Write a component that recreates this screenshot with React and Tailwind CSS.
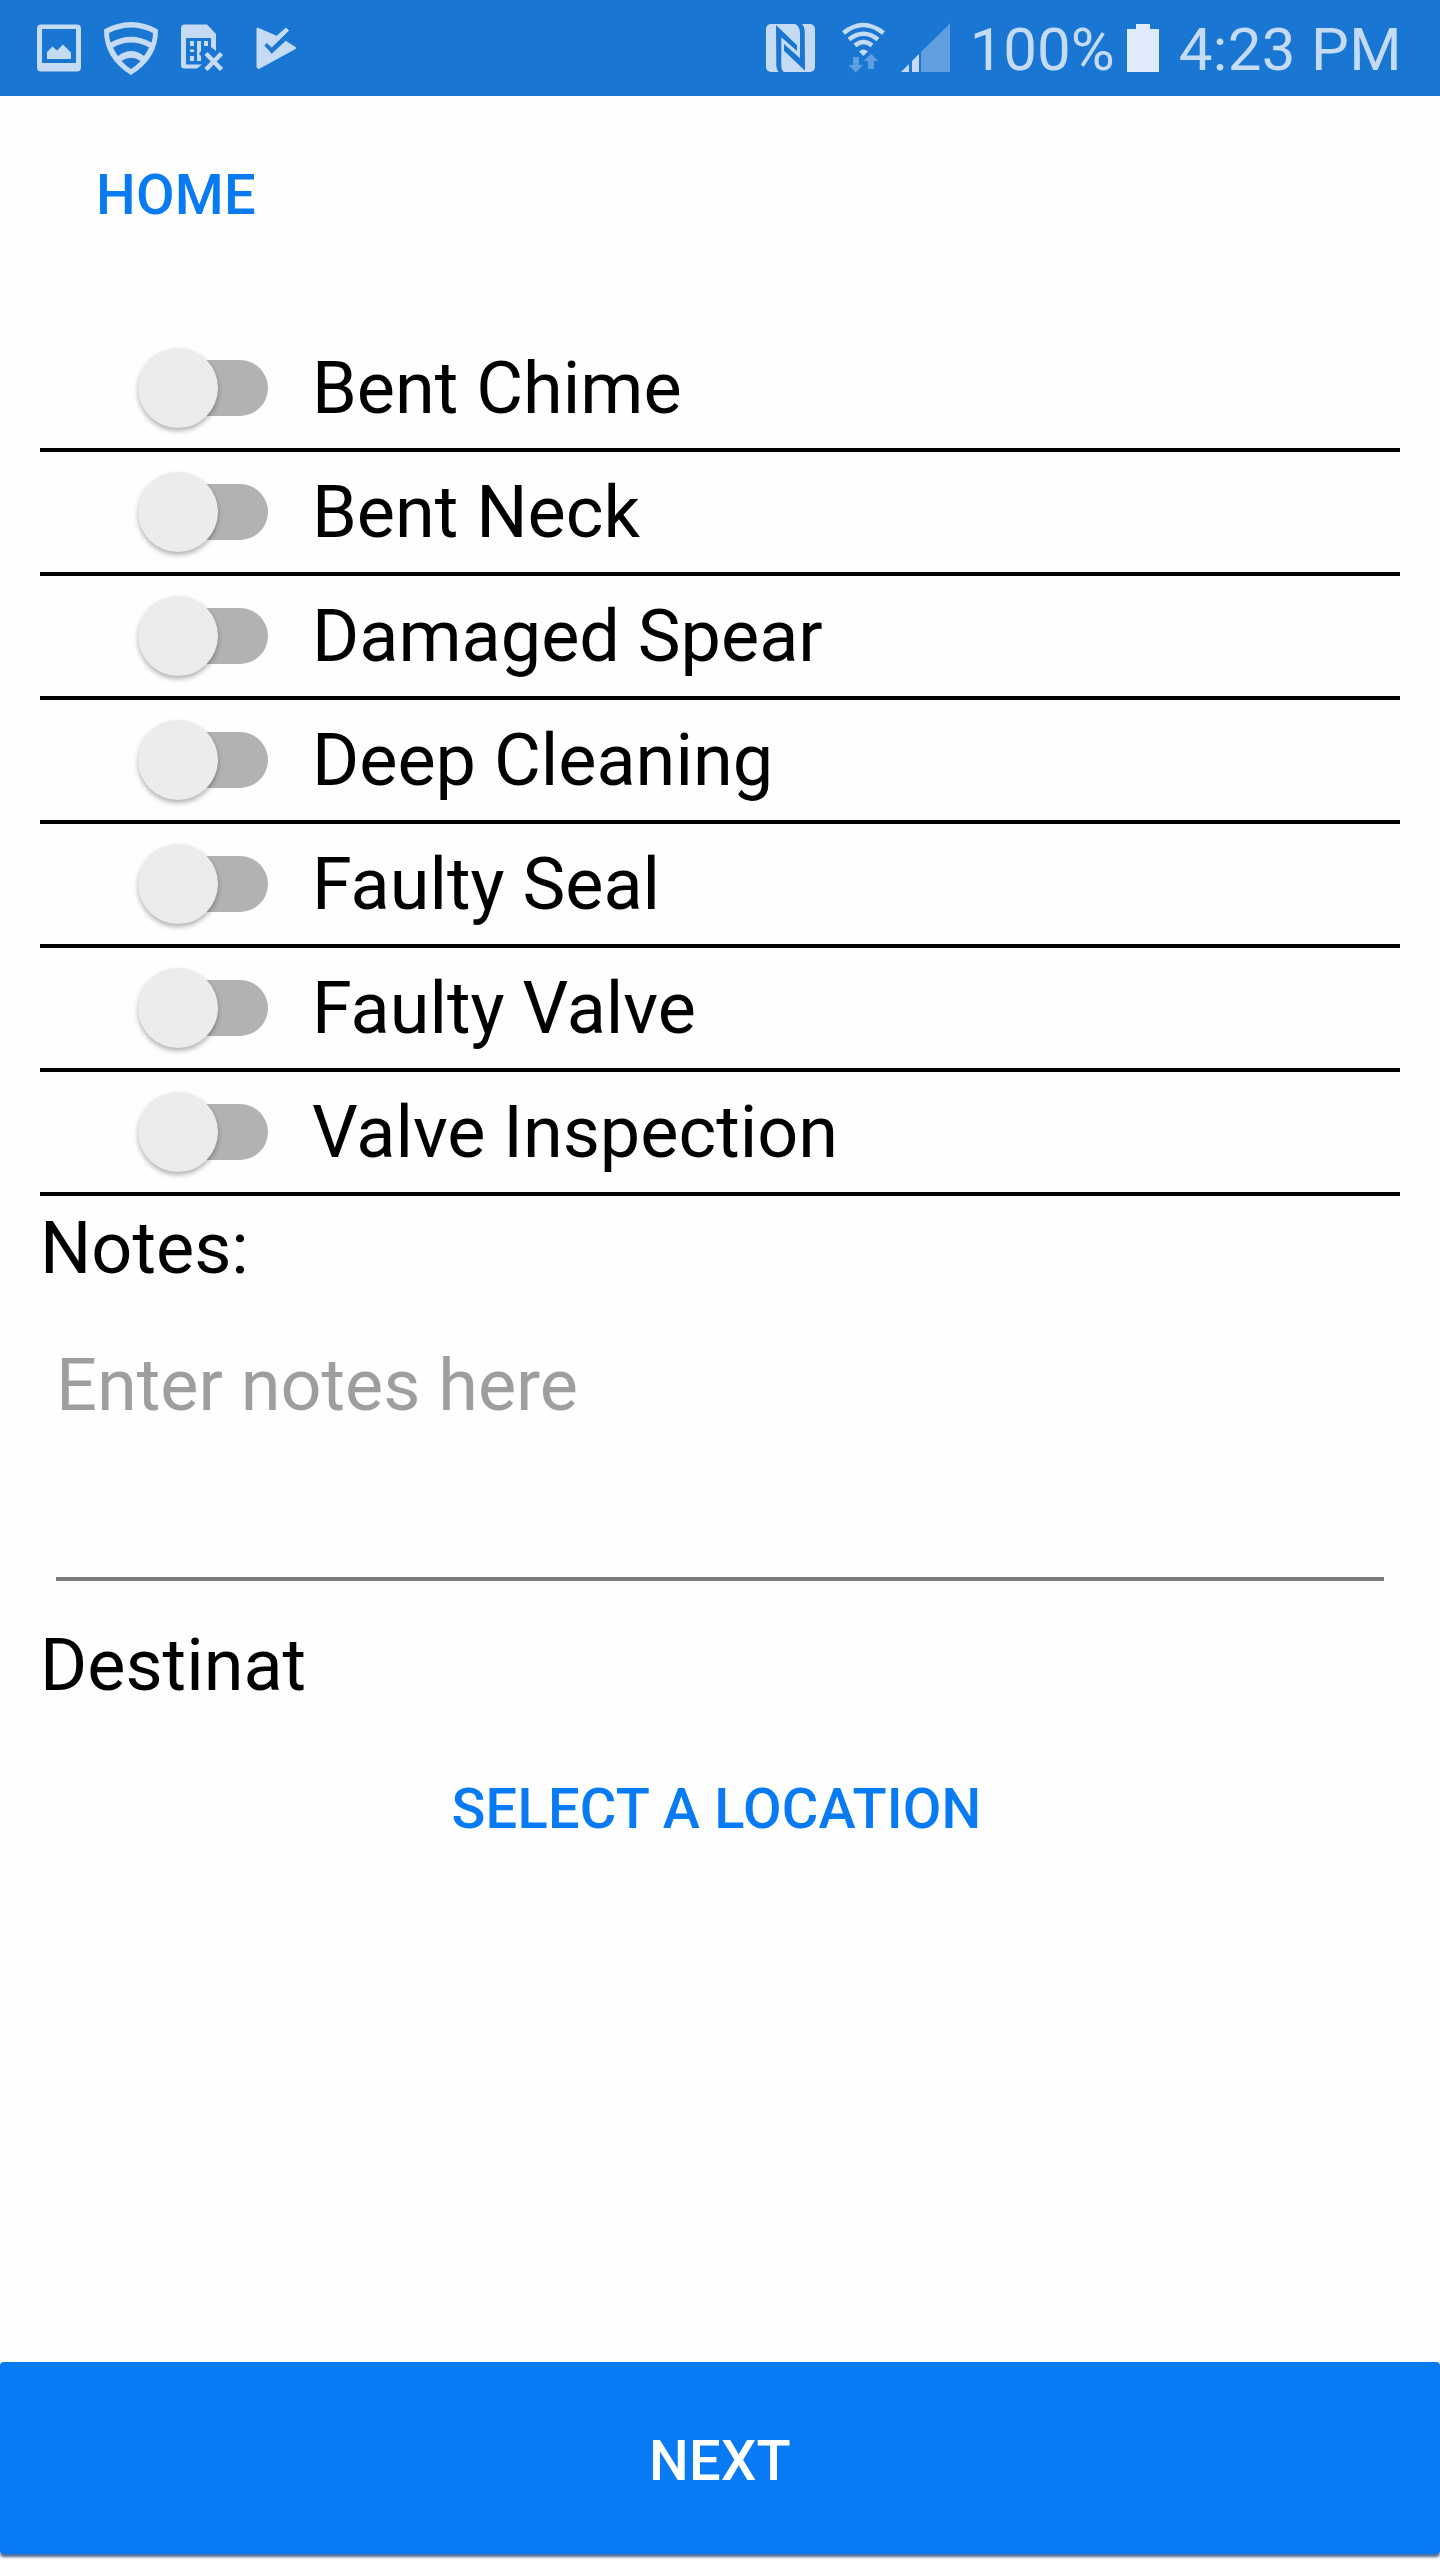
const defects = [
  "Bent Chime",
  "Bent Neck",
  "Damaged Spear",
  "Deep Cleaning",
  "Faulty Seal",
  "Faulty Valve",
  "Valve Inspection",
];

const TINT = "#c5daf3";
const BAR = "#1976d3";

function NotificationIcons() {
  return (
    <svg className="h-24 w-[320px] shrink-0" viewBox="0 0 320 96" fill={TINT}>
      {/* picture */}
      <path fillRule="evenodd" d="M41 24.5h36a4 4 0 0 1 4 4v39a4 4 0 0 1-4 4H41a4 4 0 0 1-4-4v-39a4 4 0 0 1 4-4zM42 29v34h34V29z" />
      <path d="M47 52l5.500-5.500 4.500 4 6-6 8 8V59H47z" />
      {/* shield */}
      <path fillRule="evenodd" d="M104 29.500Q117 22 131 22T158 29.500Q158.500 58 131 75Q103.500 58 104 29.500zM109 33Q109 38 110.500 42.500Q131 31 151.500 42.500Q153 38 153 33Q142 27.500 131 27.500T109 33zM113 47.500Q115 52 118 56Q131 46 144 56Q147 52 149 47.500Q131 37.500 113 47.500zM121.500 61Q126 66 131 69Q136 66 140.500 61Q131 54.500 121.500 61z" />
      {/* sim card */}
      <path fillRule="evenodd" d="M184.500 24.500H207L216 34V51L211 47V38H186V64.500H202L197 68.500H184.500a3.500 3.500 0 0 1-3.500-3.500V28a3.500 3.500 0 0 1 3.500-3.500z" />
      <path d="M190 41h4v5h-4zM190 49.500h4v2.500h-4zM190 56h4v5h-4zM197 41h4v10l-2 3 2 2v5h-4zM204 41h4v5h-4z" />
      <path d="M206 53.500L221.500 69.500M221.500 53.500L206 69.500" stroke={TINT} strokeWidth="4.500" />
      {/* play check */}
      <path
        d="M257.500 28L276.700 36.300L286 28L288.500 30.600L271.700 47L266.700 42.500L264 45.500L271.700 54.300L285.700 41.200L295.500 47.500V48.500L259 68.500L257 67.500V28.500z"
        stroke={TINT}
        strokeWidth="1"
        strokeLinejoin="round"
      />
    </svg>
  );
}

function RadioIcons() {
  return (
    <svg className="h-24 w-[192px] shrink-0" viewBox="760 0 192 96" fill={TINT}>
      {/* nfc */}
      <rect x="765" y="24" width="49" height="48" rx="5" />
      <path
        d="M775 25L796 45.300V51L780.300 37.300V66.700Q780.300 70 783.300 72.500H778Q775.300 70 775.300 65zM804 70.700L783 50.700V44L799 58.300V33.300Q799 26 793.300 23.500H800.700Q803.700 26.700 803.700 31.700z"
        fill={BAR}
      />
      {/* wifi */}
      <g fill="none" stroke={TINT} strokeWidth="4.500">
        <path d="M842.500 33Q862 17 882.500 33" />
        <path d="M848 39.500Q862.500 28 877 39.500" />
        <path d="M854 45.500Q862.500 38.500 871 45.500" />
      </g>
      <path d="M858 51.500Q862.500 47.500 867 51.500L862.500 56z" />
      <path d="M852 57h6v8h4l-7.300 7.500L847.500 65h4.500zM867 69h6v-8h4l-7-7.500L863 61h4z" fill="#5f9fdf" />
      {/* cell signal */}
      <path d="M900 72L908 64V72zM911 61L918 54V72H911z" />
      <path d="M920 52L949 23.500V72H920z" fill="#5f9fdf" />
    </svg>
  );
}

function StatusBar() {
  return (
    <header className="flex h-24 shrink-0 items-center justify-between bg-[#1976d3] text-[60px] leading-none text-[#c5daf3]">
      <NotificationIcons />
      <div className="flex items-center pr-[38px]">
        <RadioIcons />
        <span className="ml-[17px] whitespace-nowrap pt-[4px]">100%</span>
        <svg className="ml-[12px] h-12 w-8 shrink-0" viewBox="0 0 32 48" fill="#dfeafa">
          <path d="M9 0h14v5h9v43H0V5h9z" />
        </svg>
        <span className="ml-[20px] whitespace-nowrap pt-[4px] tracking-[0.35px]">4:23 PM</span>
      </div>
    </header>
  );
}

function Switch() {
  return (
    <button role="switch" aria-checked="false" className="flex h-20 w-[131px] shrink-0 items-center">
      <span className="z-10 h-20 w-20 shrink-0 rounded-full bg-[#ececec] shadow-[0_3px_5px_rgba(0,0,0,0.3)]" />
      <span className="-ml-10 h-14 w-[90px] shrink-0 rounded-r-full bg-[#b2b2b2]" />
    </button>
  );
}

export default function App() {
  return (
    <div className="flex h-[2560px] w-[1440px] flex-col overflow-hidden bg-[#fefefe] font-['Roboto',sans-serif] text-black">
      <StatusBar />
      <nav className="flex h-[232px] shrink-0 items-start pl-24 pt-[67px]">
        <button className="text-[56px] font-medium leading-[64px] tracking-[0.25px] text-[#087bf4]">HOME</button>
      </nav>
      <main className="flex flex-1 flex-col px-10">
        <ul className="flex flex-col">
          {defects.map((name) => (
            <li key={name} className="flex h-[124px] items-center border-b-4 border-black pl-[98px] text-[72px] leading-[84px]">
              <Switch />
              <span className="ml-[43px] whitespace-nowrap pt-[2px]">{name}</span>
            </li>
          ))}
        </ul>
        <h2 className="pt-[11px] text-[72px] leading-[84px]">Notes:</h2>
        <div className="mx-4 mt-[53px] h-[237px] border-b-4 border-[#7b7b7b] text-[72px] leading-[84px] text-[#9e9e9e]">Enter notes here</div>
        <h2 className="mt-[43px] text-[72px] leading-[84px]">Destinat</h2>
        <button className="mr-[7px] mt-[69px] self-center text-[56px] font-medium leading-[64px] tracking-[0.2px] text-[#087bf4]">SELECT A LOCATION</button>
      </main>
      <button className="mb-[6px] h-[192px] shrink-0 rounded-[4px] bg-[#087bf4] pt-[5px] text-[56px] font-medium leading-[64px] tracking-[0.25px] text-white shadow-[0_3px_3px_rgba(0,40,100,0.7)]">NEXT</button>
    </div>
  );
}
